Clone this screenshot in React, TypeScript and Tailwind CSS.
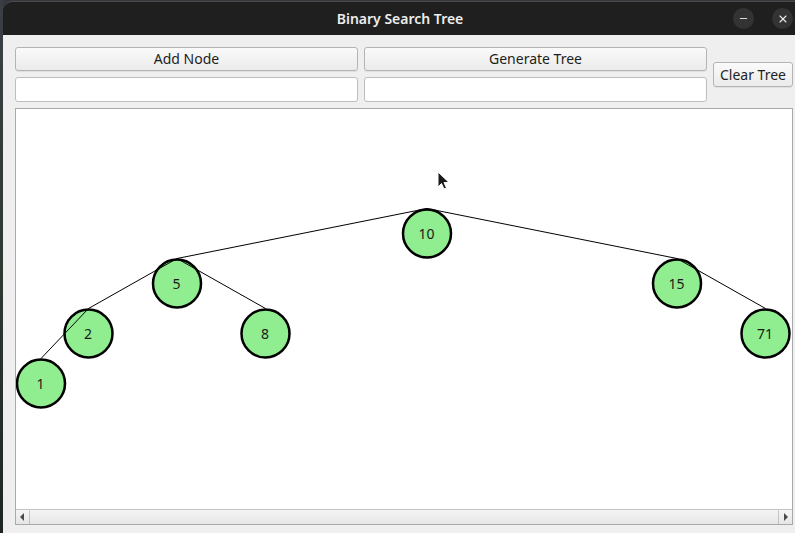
import { Minus, X } from "lucide-react";

type TreeNode = {
  value: number;
  x: number;
  y: number;
  children: TreeNode[];
};

// scene positions are in canvas coordinates (canvas inner top-left = 0,0)
const OX = 16;
const OY = 109;
const R = 24;

const tree: TreeNode = {
  value: 10,
  x: 427 - OX,
  y: 233.5 - OY,
  children: [
    {
      value: 5,
      x: 177 - OX,
      y: 283.5 - OY,
      children: [
        {
          value: 2,
          x: 88.5 - OX,
          y: 333.5 - OY,
          children: [{ value: 1, x: 41 - OX, y: 383.5 - OY, children: [] }],
        },
        { value: 8, x: 265.5 - OX, y: 333.5 - OY, children: [] },
      ],
    },
    {
      value: 15,
      x: 677 - OX,
      y: 283.5 - OY,
      children: [{ value: 71, x: 765.5 - OX, y: 333.5 - OY, children: [] }],
    },
  ],
};

// draw node, then the edges to its children, then the children
const renderNode = (node: TreeNode): JSX.Element[] => {
  const out: JSX.Element[] = [
    <g key={`n${node.value}`}>
      <circle
        cx={node.x}
        cy={node.y}
        r={R}
        fill="#90ee90"
        stroke="#000"
        strokeWidth={2.5}
      />
      <text
        x={node.x - 0.5}
        y={node.y + 5}
        textAnchor="middle"
        fontSize={14}
        fontFamily="'Noto Sans', sans-serif"
        fill="#1a1a1a"
      >
        {node.value}
      </text>
    </g>,
  ];
  node.children.forEach((child) => {
    out.push(
      <line
        key={`e${node.value}-${child.value}`}
        x1={node.x}
        y1={node.y - R - 1}
        x2={child.x}
        y2={child.y - R - 1}
        stroke="#000"
        strokeWidth={1}
      />
    );
    out.push(...renderNode(child));
  });
  return out;
};

const QtButton = ({ label, className = "" }: { label: string; className?: string }) => (
  <button
    className={`h-[24px] rounded-[3px] border border-[#b4b4b4] bg-gradient-to-b from-[#fafafa] to-[#ebebeb] text-[14px] text-[#1e1e1e] leading-none shadow-[0_1px_0_rgba(0,0,0,0.06)] ${className}`}
  >
    {label}
  </button>
);

export default function App() {
  return (
    <div className="w-[795px] h-[533px] bg-[#35383d] flex overflow-hidden font-['Noto_Sans',sans-serif]">
      <div className="w-[3px] shrink-0 bg-gradient-to-b from-[#3b3f45] via-[#2f3a33] to-[#1f2622]" />
      <div className="flex-1 flex flex-col rounded-tl-[10px] overflow-hidden mt-[1px] border-t border-[#4a4a4a]">
        {/* title bar */}
        <div className="h-[33px] shrink-0 bg-[#1f1f1f] grid grid-cols-[1fr_auto_1fr] items-center">
          <div />
          <span className="text-[14px] font-semibold text-[#ededed] pl-[2px]">
            Binary Search Tree
          </span>
          <div className="flex justify-end items-center gap-[18px] pr-[2px]">
            <span className="w-[21px] h-[21px] rounded-full bg-[#333333] flex items-center justify-center text-[#e8e8e8]">
              <Minus size={11} strokeWidth={2} />
            </span>
            <span className="w-[21px] h-[21px] rounded-full bg-[#333333] flex items-center justify-center text-[#e8e8e8]">
              <X size={12} strokeWidth={2.25} />
            </span>
          </div>
        </div>

        {/* window body */}
        <div className="flex-1 bg-[#efefef] flex flex-col pl-[12px] pr-[2px] pt-[12px] pb-[8px] gap-[6px]">
          <div className="flex items-center gap-[6px]">
            <div className="grid grid-cols-[343px_343px] gap-x-[6px] gap-y-[6px]">
              <QtButton label="Add Node" />
              <QtButton label="Generate Tree" />
              <input className="h-[25px] rounded-[3px] border border-[#bdbdbd] bg-white outline-none" />
              <input className="h-[25px] rounded-[3px] border border-[#bdbdbd] bg-white outline-none" />
            </div>
            <QtButton label="Clear Tree" className="w-[80px] h-[25px]" />
          </div>

          {/* graphics view */}
          <div className="flex-1 border border-[#a9a9a9] bg-white flex flex-col relative">
            <div className="flex-1 relative overflow-hidden">
              <svg width="776" height="400" className="absolute left-0 top-0">
                {renderNode(tree)}
              </svg>
              {/* mouse pointer */}
              <svg
                width="14"
                height="20"
                viewBox="0 0 14 20"
                className="absolute left-[421px] top-[62px]"
              >
                <path
                  d="M1 1 L1 16 L4.5 12.5 L7 18 L9.5 17 L7 11.5 L12 11.5 Z"
                  fill="#1a1a1a"
                  stroke="#fff"
                  strokeWidth={1}
                  strokeLinejoin="round"
                />
              </svg>
            </div>
            {/* horizontal scrollbar */}
            <div className="h-[15px] shrink-0 border-t border-[#c4c4c4] bg-gradient-to-b from-[#f4f4f4] to-[#e6e6e6] flex items-stretch">
              <div className="w-[14px] border-r border-[#c4c4c4] flex items-center justify-center">
                <svg width="5" height="8" viewBox="0 0 5 8">
                  <path d="M4 0 L0 4 L4 8 Z" fill="#4a4a4a" />
                </svg>
              </div>
              <div className="flex-1" />
              <div className="w-[14px] border-l border-[#c4c4c4] flex items-center justify-center">
                <svg width="5" height="8" viewBox="0 0 5 8">
                  <path d="M1 0 L5 4 L1 8 Z" fill="#4a4a4a" />
                </svg>
              </div>
            </div>
          </div>
        </div>
      </div>
    </div>
  );
}
